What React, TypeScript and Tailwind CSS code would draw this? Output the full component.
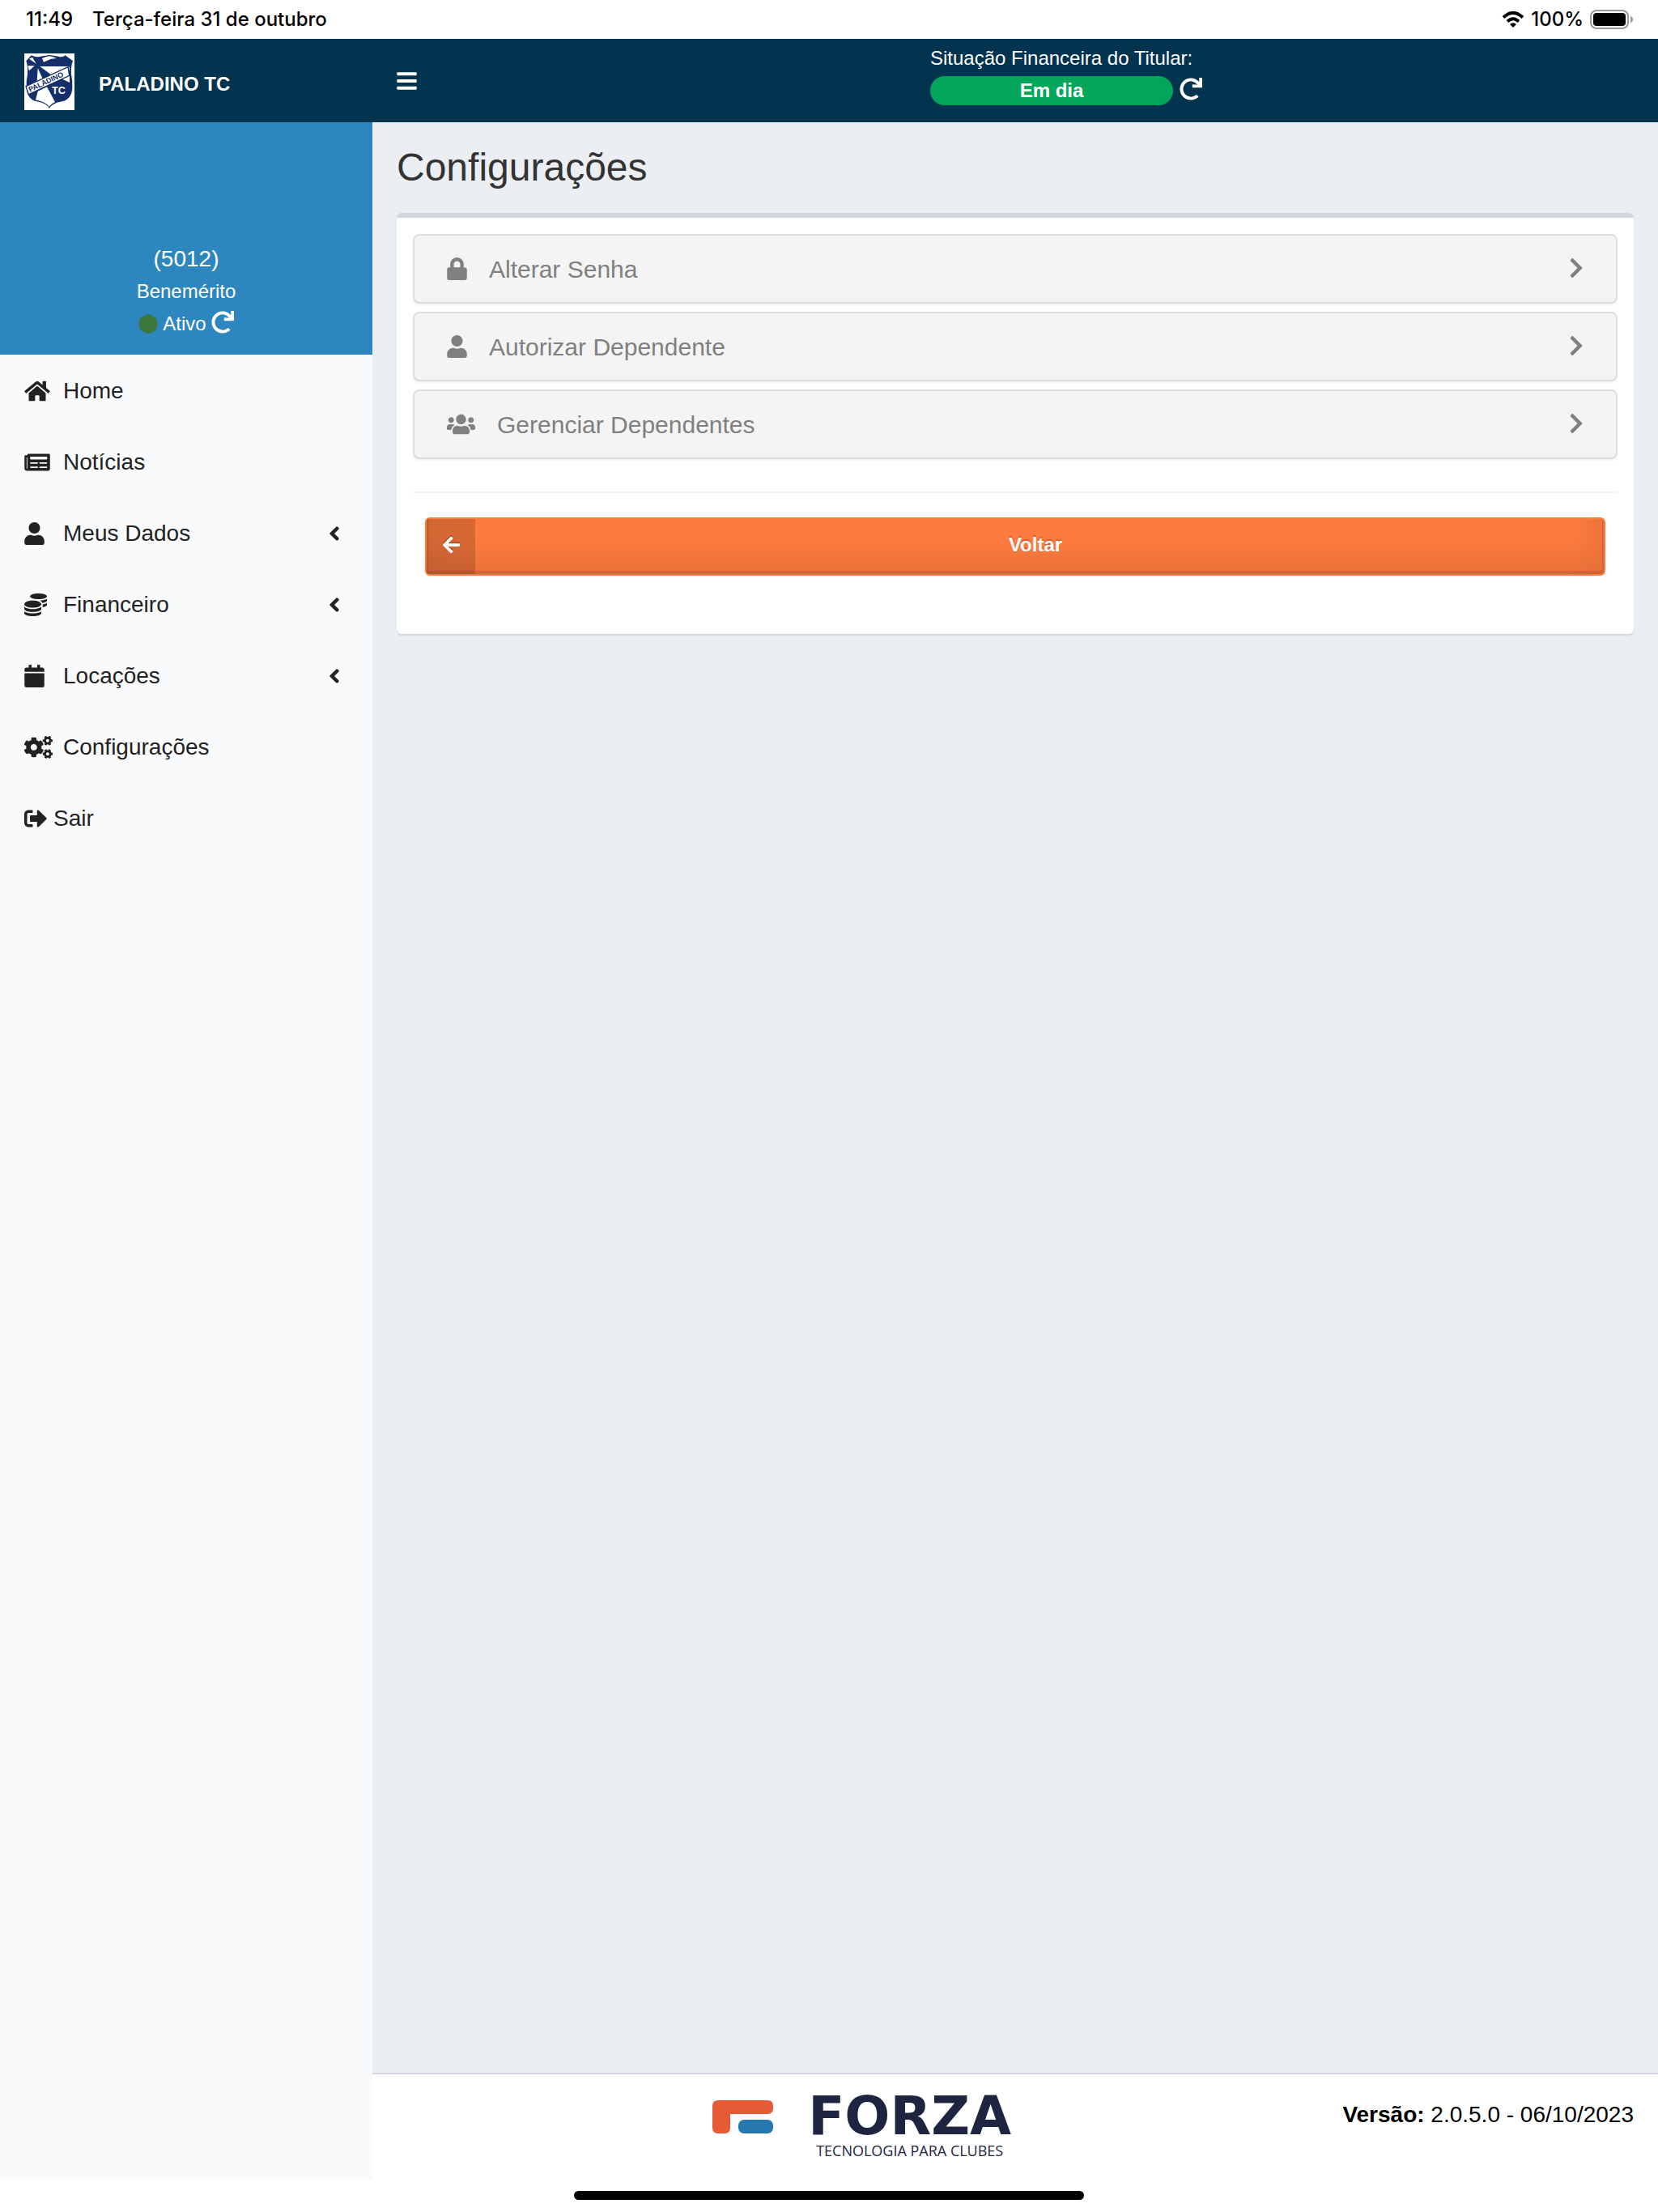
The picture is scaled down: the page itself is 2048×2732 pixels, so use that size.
import type { ReactNode } from "react";
import {
  FaAngleLeft, FaArrowLeft, FaBars, FaCalendar, FaChevronRight, FaCircle, FaCogs, FaCoins, FaHome,
  FaLock, FaNewspaper, FaRedo, FaSignOutAlt, FaUser, FaUsers,
} from "react-icons/fa";

interface MenuItem { key: string; label: string; icon: ReactNode; expandable?: boolean; compact?: boolean }
interface SettingItem { key: string; label: string; icon: ReactNode }

const menuItems: MenuItem[] = [
  { key: "home", label: "Home", icon: <FaHome className="w-8" /> },
  { key: "noticias", label: "Notícias", icon: <FaNewspaper className="w-8" /> },
  { key: "meus-dados", label: "Meus Dados", icon: <FaUser className="w-[25px]" />, expandable: true },
  { key: "financeiro", label: "Financeiro", icon: <FaCoins className="w-7" />, expandable: true },
  { key: "locacoes", label: "Locações", icon: <FaCalendar className="w-[25px]" />, expandable: true },
  { key: "configuracoes", label: "Configurações", icon: <FaCogs className="w-[35px]" /> },
  { key: "sair", label: "Sair", icon: <FaSignOutAlt className="w-7" />, compact: true },
];

const settings: SettingItem[] = [
  { key: "senha", label: "Alterar Senha", icon: <FaLock className="w-[25px]" /> },
  { key: "autorizar", label: "Autorizar Dependente", icon: <FaUser className="w-[25px]" /> },
  { key: "gerenciar", label: "Gerenciar Dependentes", icon: <FaUsers className="w-[35px]" /> },
];

function ClubCrest() {
  return (
    <svg viewBox="0 0 186 210" className="h-[70px] w-[62px] bg-white" role="img" aria-label="Paladino TC">
      <path d="M7 28 L26 7 Q44 16 60 11 Q78 8 93 6 Q108 8 126 11 Q142 16 152 7 L180 28 Q172 48 174 78 Q180 104 178 128 Q176 168 140 178 Q102 184 93 204 Q84 184 46 178 Q10 168 8 128 Q6 104 12 78 Q14 48 7 28 Z" fill="#152f6b" />
      <path d="M66 18 Q80 12 93 10 Q106 12 120 18 L100 20 L72 32 Z" fill="#fff" />
      <path d="M18 20 L30 14 L44 38 Z" fill="#fff" />
      <path d="M13 46 L38 46 L18 64 Z" fill="#fff" />
      <path d="M58 48 L166 48 L168 62 L106 84 Z" fill="#fff" />
      <path d="M50 54 L76 112 L46 120 Z" fill="#fff" />
      <path d="M50 140 L84 124 L114 180 Q98 188 93 198 Q84 182 42 172 Z" fill="#fff" />
      <path d="M138 94 L168 78 L168 108 Z" fill="#fff" />
      <path d="M6 122 L162 50 L167 82 L16 152 Z" fill="#fff" stroke="#152f6b" strokeWidth="4" />
      <text transform="translate(21 143) rotate(-25)" fontFamily="Liberation Sans, sans-serif" fontWeight="700" fontSize="27" fill="#152f6b">PALADINO</text>
      <text x="102" y="149" fontFamily="Liberation Sans, sans-serif" fontWeight="700" fontSize="38" fill="#fff">TC</text>
    </svg>
  );
}

function ForzaLogo() {
  return (
    <div className="flex gap-6 text-[#1f2540]">
      <svg viewBox="0 0 75 41" className="mt-[2px] h-[41px] w-[75px]" aria-hidden="true">
        <path d="M7 0H68Q75 0 75 7V10Q75 17 68 17H22V34Q22 41 15 41H7Q0 41 0 34V7Q0 0 7 0Z" fill="#e45b36" />
        <rect x="32" y="24" width="43" height="17" rx="7" fill="#2878b0" />
      </svg>
      <div className="flex w-[290px] flex-col items-center">
        <span className="font-['DejaVu_Sans'] text-[66px] leading-[44px] font-bold">FORZA</span>
        <span className="mt-2 font-['Open_Sans'] text-lg leading-6">TECNOLOGIA PARA CLUBES</span>
      </div>
    </div>
  );
}

function StatusBar() {
  return (
    <div className="flex h-12 items-center justify-between pr-[30px] pl-8 font-['Inter'] text-2xl font-medium text-black">
      <div className="flex gap-6">
        <span>11:49</span>
        <span>Terça-feira 31 de outubro</span>
      </div>
      <div className="flex items-center gap-2">
        <svg viewBox="0 0 28 20" className="h-5 w-7" aria-hidden="true">
          <path d="M2 7.5 Q14 -3.5 26 7.5" fill="none" stroke="#000" strokeWidth="4" />
          <path d="M7 12.5 Q14 6 21 12.5" fill="none" stroke="#000" strokeWidth="4" />
          <path d="M14 20 L10 16 Q14 12.5 18 16 Z" fill="#000" />
        </svg>
        <span>100%</span>
        <svg viewBox="0 0 54 24" className="h-6 w-[54px]" aria-hidden="true">
          <rect x="1" y="1" width="46" height="22" rx="7" fill="none" stroke="#9a9a9a" strokeWidth="2" />
          <rect x="4" y="4" width="40" height="16" rx="4" fill="#000" />
          <path d="M50 8 Q53 9 53 12 Q53 15 50 16 Z" fill="#9a9a9a" />
        </svg>
      </div>
    </div>
  );
}

function Header() {
  return (
    <header className="flex h-[103px] shrink-0 bg-[#02334f] text-white">
      <a href="#" className="flex w-[460px] shrink-0 items-center gap-[30px] px-[30px] pt-[2px] text-2xl font-bold">
        <ClubCrest />
        <span className="pt-[6px]">PALADINO TC</span>
      </a>
      <button type="button" aria-label="Alternar menu" className="flex w-[86px] items-center px-[30px] text-[28px]">
        <FaBars className="w-[25px]" />
      </button>
      <div className="flex flex-1 justify-center pl-10">
        <div className="pt-2">
          <p className="text-2xl leading-8">Situação Financeira do Titular:</p>
          <div className="mt-[6px] flex items-center gap-2">
            <span className="w-[300px] rounded-full bg-[#02a65a] text-center text-2xl leading-9 font-bold">Em dia</span>
            <button type="button" aria-label="Atualizar situação" className="mb-1 text-[28px]"><FaRedo /></button>
          </div>
        </div>
      </div>
    </header>
  );
}

function Sidebar() {
  return (
    <aside className="w-[460px] shrink-0 bg-[#f9fafc]">
      <div className="flex h-[287px] flex-col items-center justify-end bg-[#2d86bd] pb-[18px] text-2xl leading-10 text-white">
        <p className="text-[28px] leading-10">(5012)</p>
        <p>Benemérito</p>
        <p className="flex items-center gap-[6px]">
          <FaCircle className="text-[#3c763d]" />
          Ativo
          <button type="button" aria-label="Atualizar cadastro" className="pb-1 text-[28px]"><FaRedo /></button>
        </p>
      </div>
      <nav>
        <ul>
          {menuItems.map((item) => (
            <li key={item.key}>
              <a href="#" className="flex h-[88px] items-center gap-2 pt-[2px] pr-10 pl-[30px] text-[28px] text-[#222]">
                <span className={item.compact ? "" : "w-10"}>{item.icon}</span>
                <span className="flex-1">{item.label}</span>
                {item.expandable && <FaAngleLeft className="w-[14px]" />}
              </a>
            </li>
          ))}
        </ul>
      </nav>
    </aside>
  );
}

export default function App() {
  return (
    <div className="flex min-h-screen flex-col bg-white font-['Liberation_Sans',Arial,sans-serif]">
      <StatusBar />
      <Header />
      <div className="flex flex-1">
        <Sidebar />
        <div className="flex flex-1 flex-col bg-[#ebeff4]">
          <main className="flex-1 px-[30px] pt-[30px]">
            <h1 className="text-5xl leading-[52px] text-[#333]">Configurações</h1>
            <section className="mt-[30px] rounded-md border-t-[6px] border-[#d2d6df] bg-white px-5 pt-5 pb-[72px] shadow-[0_2px_2px_rgba(0,0,0,0.1)]">
              <ul className="flex flex-col gap-[10px]">
                {settings.map((item) => (
                  <li key={item.key}>
                    <a href="#" className="flex h-[86px] items-center gap-[27px] rounded-lg border-2 border-[#ddd] bg-[#f4f4f4] px-10 text-[30px] text-[#808080] shadow-[0_2px_2px_rgba(0,0,0,0.05)]">
                      <span className="text-[28px]">{item.icon}</span>
                      <span className="flex-1">{item.label}</span>
                      <FaChevronRight className="mb-[2px] w-[18px] text-[28px]" />
                    </a>
                  </li>
                ))}
              </ul>
              <hr className="mt-10 border-t-2 border-[#f4f4f4]" />
              <div className="mt-[30px] px-[15px]">
                <button type="button" className="flex h-[72px] w-full rounded-md border-2 border-[#ff7c3f] bg-[#ff7c3f] text-2xl font-bold text-white shadow-[inset_-2px_-4px_0_rgba(0,0,0,0.1),inset_2px_0_0_rgba(0,0,0,0.1),inset_-10px_-20px_40px_rgba(0,0,0,0.1)] [text-shadow:0_-2px_0_rgba(0,0,0,0.2)]">
                  <span className="flex h-full w-[60px] items-center justify-center bg-black/15 pb-1">
                    <FaArrowLeft className="w-[21px] drop-shadow-[0_-2px_0_rgba(0,0,0,0.2)]" />
                  </span>
                  <span className="flex-1 self-center pr-[10px] pb-1">Voltar</span>
                </button>
              </div>
            </section>
          </main>
          <footer className="flex min-h-[132px] border-t-2 border-[#d2d6df] bg-white px-[30px] pt-[30px] text-[28px] leading-10 text-black">
            <div className="flex flex-1 justify-center"><ForzaLogo /></div>
            <p><b>Versão:</b> 2.0.5.0 - 06/10/2023</p>
          </footer>
        </div>
      </div>
      <div className="flex h-10 justify-center pt-[14px]">
        <div className="h-[11px] w-[630px] rounded-full bg-black" />
      </div>
    </div>
  );
}
